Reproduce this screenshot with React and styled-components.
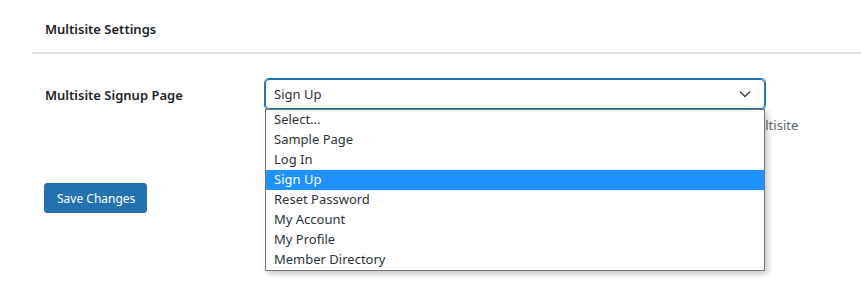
import styled, { createGlobalStyle } from "styled-components";

const GlobalStyle = createGlobalStyle`
  html, body {
    margin: 0;
    min-height: 100vh;
    background: #fff;
    font-family: "Noto Sans", "Open Sans", sans-serif;
    color: #1d2327;
  }
`;

const pages = [
  "Select...",
  "Sample Page",
  "Log In",
  "Sign Up",
  "Reset Password",
  "My Account",
  "My Profile",
  "Member Directory",
];

const App = () => {
  const selected = "Sign Up";
  return (
    <>
      <GlobalStyle />
      <StyledWrap>
        <StyledHeader>Multisite Settings</StyledHeader>
        <StyledRow>
          <StyledLabel>Multisite Signup Page</StyledLabel>
          <StyledField>
            <StyledSelectBox>
              <span>{selected}</span>
              <svg width="12" height="8" viewBox="0 0 12 8">
                <path d="M1 1.5 L6 6.5 L11 1.5" fill="none" stroke="#3c434a" strokeWidth="1.4" />
              </svg>
              <StyledMenu>
                {pages.map((page) => (
                  <StyledOption key={page} $active={page === selected}>
                    {page}
                  </StyledOption>
                ))}
              </StyledMenu>
            </StyledSelectBox>
            <StyledDescription>
              Select the page where all new users sign up for an account on your WordPress Multisite
            </StyledDescription>
          </StyledField>
        </StyledRow>
        <StyledButton>Save Changes</StyledButton>
      </StyledWrap>
    </>
  );
};

const StyledWrap = styled.div`
  min-height: 299px;
  padding-left: 32px;
`;

const StyledHeader = styled.h2`
  margin: 0;
  padding: 20px 13px 13px;
  font-size: 13px;
  font-weight: 600;
  line-height: 19px;
  border-bottom: 2px solid #dcdcde;
`;

const StyledRow = styled.div`
  display: flex;
  align-items: flex-start;
  padding: 25px 0 0 13px;
`;

const StyledLabel = styled.div`
  width: 220px;
  font-size: 13px;
  font-weight: 600;
  line-height: 20px;
  padding-top: 6px;
`;

const StyledField = styled.div`
  display: flex;
  flex-direction: column;
`;

const StyledSelectBox = styled.div`
  position: relative;
  box-sizing: border-box;
  width: 500px;
  height: 30px;
  display: flex;
  align-items: center;
  justify-content: space-between;
  padding: 0 10px 0 8px;
  border: 1px solid #2271b1;
  box-shadow: 0 0 0 1px #2271b1;
  border-radius: 4px;
  font-size: 13px;
  color: #2c3338;
  svg {
    margin-right: 3px;
  }
`;

const StyledMenu = styled.div`
  position: absolute;
  top: 29px;
  left: -1px;
  width: 500px;
  box-sizing: border-box;
  background: #fff;
  border: 1px solid #767676;
  box-shadow: 3px 3px 6px rgba(0, 0, 0, 0.22);
  z-index: 2;
`;

const StyledOption = styled.div`
  height: 20px;
  line-height: 19px;
  padding-left: 8px;
  font-size: 13px;
  color: ${(p) => (p.$active ? "#fff" : "#2c3338")};
  background: ${(p) => (p.$active ? "#1e90ff" : "transparent")};
`;

const StyledDescription = styled.p`
  margin: 6px 0 0;
  font-size: 13px;
  line-height: 20px;
  color: #646970;
  white-space: nowrap;
`;

const StyledButton = styled.button`
  margin: 48px 0 0 12px;
  height: 30px;
  padding: 0 11px 0 12px;
  background: #2271b1;
  border: 1px solid #2271b1;
  border-radius: 3px;
  color: #fff;
  font-family: inherit;
  font-size: 12px;
`;

export default App;
